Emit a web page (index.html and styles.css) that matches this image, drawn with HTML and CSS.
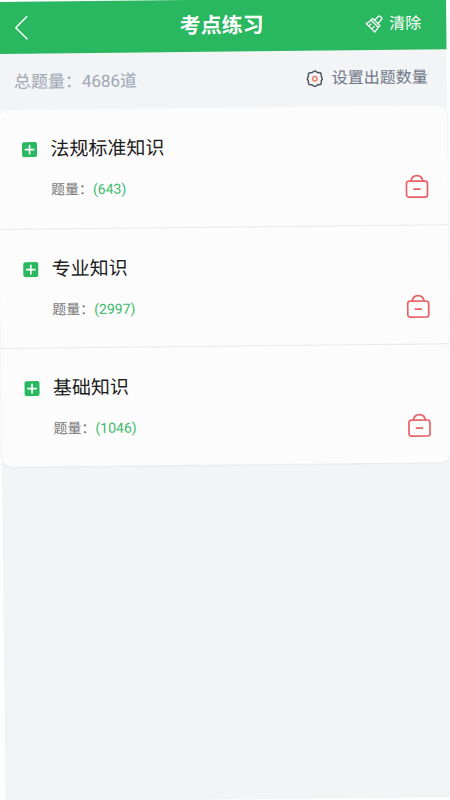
FILE: index.html
```html
<!DOCTYPE html>
<html lang="zh-CN">
<head>
<meta charset="utf-8">
<meta name="viewport" content="width=device-width, initial-scale=1">
<title>考点练习</title>
<link rel="stylesheet" href="styles.css">
</head>
<body>
<svg class="sprite" aria-hidden="true">
  <symbol id="plus" viewBox="0 0 16 16">
    <rect x="0.5" y="0.5" width="15" height="15" rx="2" fill="#29b85f"/>
    <path d="M8 3.2v9.600M3.2 8h9.600" stroke="#fff" stroke-width="1.700"/>
  </symbol>
  <symbol id="lock" viewBox="0 0 24 26">
    <g fill="none" stroke="#e66266" stroke-width="1.700" stroke-linecap="round">
      <path d="M6 7.500C6.600 4 8.800 2 12 2s5.400 2 6 5.500"/>
      <rect x="1.500" y="7.500" width="21" height="16" rx="2.500"/>
      <path d="M9 15.500h6"/>
    </g>
  </symbol>
</svg>
<div class="screen">
  <header class="bar">
    <button class="back" type="button" aria-label="返回">
      <svg width="14" height="26" viewBox="0 0 14 26" fill="none" stroke="currentColor" stroke-width="1.5"><path d="M13 1.500 1.500 13 13 24.500"/></svg>
    </button>
    <h1 class="title">考点练习</h1>
    <button class="clear" type="button">
      <svg width="18" height="18" viewBox="0 0 18 18" fill="none" stroke="currentColor" stroke-width="1.300" stroke-linejoin="round" stroke-linecap="round">
        <path d="M9.200 5.200 13.400 1.300q.9-.7 1.700.1l1.200 1.200q.8.800.1 1.700L12.700 8.600"/>
        <path d="M7.400 3.300 14.700 10.600 13 12.300 5.700 5z"/>
        <path d="M5.700 5Q3.900 7.500.9 8.300L9.500 17.100Q10.900 14.800 13 12.300M3.500 11l2.300-2M6.400 13.900l2.400-2.300"/>
      </svg>
      <span>清除</span>
    </button>
  </header>
  <main>
    <div class="summary">
      <p class="total">总题量：4686道</p>
      <button class="settings" type="button">
        <svg width="18" height="18" viewBox="0 0 18 18" fill="none">
          <path d="M6.800 2.500Q9 .1 11.200 2.500q.7.700 1.700.5 3-.3 2.500 2.600-.2 1 .4 1.700 1.300 1.700 0 3.400-.6.700-.4 1.700.5 2.900-2.500 2.600-1-.2-1.700.5-2.200 2.400-4.400 0-.7-.7-1.700-.5-3 .3-2.500-2.600.2-1-.4-1.700-1.300-1.700 0-3.400.6-.7.400-1.700-.5-2.900 2.500-2.600 1 .2 1.700-.5z" stroke="#4e535b" stroke-width="1.500" stroke-linejoin="round"/>
          <circle cx="9" cy="9" r="2.200" stroke="#f0826c" stroke-width="1.500"/>
        </svg>
        <span>设置出题数量</span>
      </button>
    </div>
    <ul class="topics">
      <li class="topic">
        <button class="expand" type="button" aria-label="展开法规标准知识"><svg width="16" height="16"><use href="#plus"/></svg></button>
        <div class="info"><h2 class="name">法规标准知识</h2><p class="count">题量：<span class="number">(643)</span></p></div>
        <svg class="lock" width="24" height="26"><use href="#lock"/></svg>
      </li>
      <li class="topic">
        <button class="expand" type="button" aria-label="展开专业知识"><svg width="16" height="16"><use href="#plus"/></svg></button>
        <div class="info"><h2 class="name">专业知识</h2><p class="count">题量：<span class="number">(2997)</span></p></div>
        <svg class="lock" width="24" height="26"><use href="#lock"/></svg>
      </li>
      <li class="topic">
        <button class="expand" type="button" aria-label="展开基础知识"><svg width="16" height="16"><use href="#plus"/></svg></button>
        <div class="info"><h2 class="name">基础知识</h2><p class="count">题量：<span class="number">(1046)</span></p></div>
        <svg class="lock" width="24" height="26"><use href="#lock"/></svg>
      </li>
    </ul>
  </main>
</div>
</body>
</html>
```
FILE: styles.css
```css
* {
  box-sizing: border-box;
}

html {
  overflow: hidden;
  background: #fdfefe;
}

body,
h1,
h2,
p,
ul {
  margin: 0;
  padding: 0;
}

body {
  font-family: Roboto, "Noto Sans CJK SC", sans-serif;
}

button {
  display: flex;
  align-items: center;
  padding: 0;
  border: 0;
  background: none;
  color: inherit;
  font: inherit;
}

svg {
  display: block;
}

.sprite {
  position: absolute;
  width: 0;
  height: 0;
}

/* The whole screen leans slightly to the left. */
.screen {
  min-height: 100vh;
  margin: 0 4px 0 -3px;
  background: #f2f4f6;
  transform: translateY(2px) rotate(-0.6deg);
  transform-origin: 0 0;
}

.bar {
  display: grid;
  grid-template-columns: 1fr auto 1fr;
  align-items: center;
  height: 52px;
  padding: 0 17px;
  background: #29b85f;
  color: #fff;
}

.back {
  justify-self: start;
}

.title {
  font-size: 21px;
  line-height: 24px;
  font-weight: 700;
}

.clear {
  justify-self: end;
  gap: 6px;
  margin-right: 8px;
  font-size: 16px;
  line-height: 24px;
}

.summary {
  display: flex;
  align-items: center;
  justify-content: space-between;
  height: 56px;
  padding: 0 19px 0 16px;
  line-height: 24px;
}

.total {
  color: #a0a7b5;
  font-size: 17px;
}

.settings {
  gap: 8px;
  color: #707888;
  font-size: 16px;
}

.topics {
  list-style: none;
  border-radius: 10px;
  background: #fcfcfc;
  box-shadow: 0 1px 2px #e6e8ea;
}

.topic {
  display: flex;
  align-items: flex-start;
  gap: 13px;
  height: 119px;
  padding: 28px 19px 0 23px;
}

.topic + .topic {
  border-top: 1px solid #e8e8e9;
}

.expand {
  height: 24px;
}

.info {
  flex: 1;
}

.name {
  color: #1b1b1b;
  font-size: 19px;
  line-height: 24px;
  font-weight: 400;
}

.count {
  margin-top: 16px;
  color: #777;
  font-size: 14px;
  line-height: 24px;
}

.number {
  color: #3dbb6c;
}

.lock {
  margin-top: 40px;
}
```
